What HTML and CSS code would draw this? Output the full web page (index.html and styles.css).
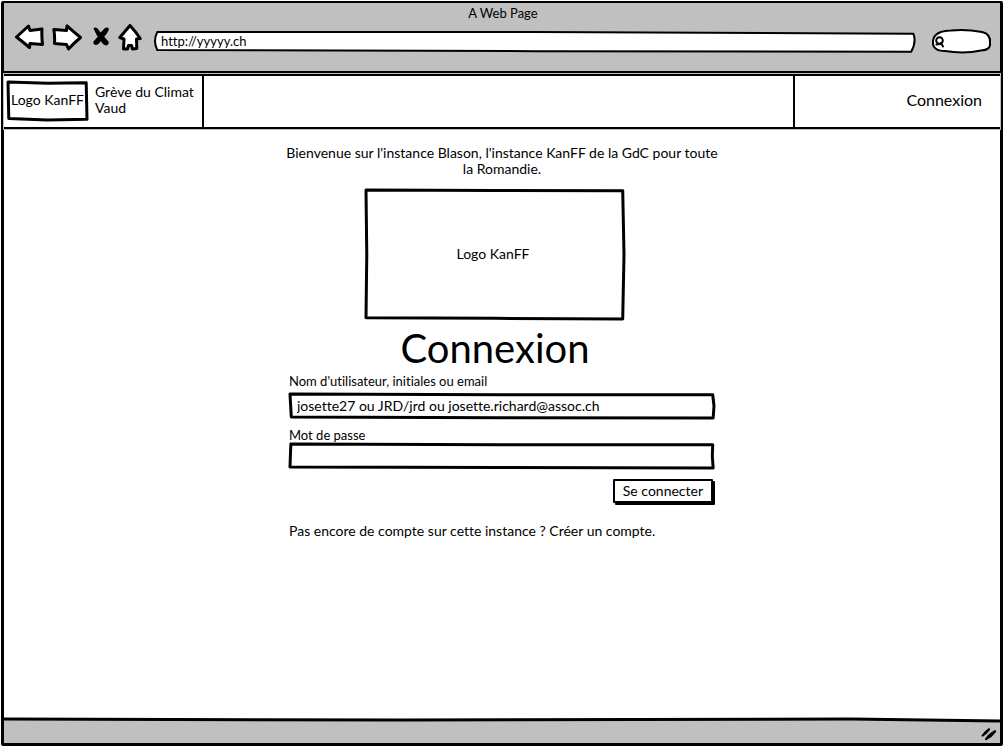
FILE: index.html
```html
<!DOCTYPE html>
<html lang="fr">
<head>
<meta charset="utf-8">
<meta name="viewport" content="width=device-width, initial-scale=1">
<title>A Web Page</title>
<link rel="stylesheet" href="styles.css">
</head>
<body>
<div class="browser">
  <header class="chrome">
    <div class="window-title">A Web Page</div>
    <div class="toolbar">
      <nav class="nav-buttons" aria-label="Navigation">
        <button type="button" class="icon-button" aria-label="Back"><svg width="30" height="28" viewBox="0 0 30 28"><path class="shape" d="M2.500 13 Q8 8 14.500 2 L16 6.500 L28 5 Q27.500 12 28.500 20.500 L16 19.500 L15.500 23.500 Q9 18 2.500 13 Z"/></svg></button>
        <button type="button" class="icon-button" aria-label="Forward"><svg width="30" height="28" viewBox="0 0 30 28"><path class="shape" d="M28.500 13.500 Q22 8 15 1.800 L14.500 6.500 L1.800 5.500 Q3 12 2.500 19.500 L14.500 20.500 L16.500 25 Q22 19 28.500 13.500 Z"/></svg></button>
        <button type="button" class="icon-button" aria-label="Stop"><svg width="20" height="28" viewBox="0 0 20 28"><path class="blade" d="M3.500 4.500 Q5 2.500 8 5 Q11.500 10 18.500 17.500 Q19.500 20.500 16 21.500 Q13 21 10.500 16.500 Q6 11 3.500 4.500 Z M14.500 4.500 Q17.500 2.500 19 5 Q18 9 12 15 Q9 21 5.500 21 Q3 20.500 3.500 17.500 Q8 13 10 9 Z"/></svg></button>
        <button type="button" class="icon-button" aria-label="Home"><svg width="24" height="28" viewBox="0 0 24 28"><path class="shape" d="M12 1.500 L1.800 13.500 L6 15 L5.500 25 L9.500 25 L10.500 21.500 L13.500 21.500 L14.500 25 L18.800 24.500 L18.500 15 L22.200 14.500 Q18 8 12 1.500 Z"/></svg></button>
      </nav>
      <div class="address">
        <svg class="sketch" viewBox="0 0 100 100" preserveAspectRatio="none" aria-hidden="true"><path d="M.3 0 L50 0 L99.800 9 Q100.200 50 99.500 99 L50 96 L.3 90 Q-.3 45 .3 0 Z"/></svg>
        <input type="text" class="address-input" aria-label="Address" value="http://yyyyy.ch">
      </div>
      <label class="search">
        <svg class="sketch" viewBox="0 0 60 24" preserveAspectRatio="none" aria-hidden="true"><path d="M2 12 Q3 2 20 1.500 Q35 0 51 3 Q60 5 59 14 Q60 21 50 21.500 Q33 25 14 22 Q1 22 2 12 Z"/></svg>
        <svg class="lens" width="12" height="12" viewBox="0 0 12 12" aria-hidden="true"><circle cx="5.500" cy="4.500" r="3.300"/><path d="M7 7 L9 10.500 M2.500 8.500 L6 8"/></svg>
        <input type="search" class="search-input" aria-label="Search">
      </label>
    </div>
  </header>

  <div class="site-header">
    <div class="brand">
      <div class="brand-logo">
        <svg class="sketch" viewBox="0 0 100 100" preserveAspectRatio="none" aria-hidden="true"><path d="M0 0 L50 3 L99 2 L100 98 L50 100 L1 96 Z"/></svg>
        <span>Logo KanFF</span>
      </div>
      <div class="brand-name">Grève du Climat<br>Vaud</div>
    </div>
    <div class="account"><a href="#login">Connexion</a></div>
  </div>

  <main class="content">
    <div class="column">
      <p class="welcome">Bienvenue sur l'instance Blason, l'instance KanFF de la GdC pour toute la Romandie.</p>
      <div class="intro">
        <div class="logo">
          <svg class="sketch" viewBox="0 0 100 100" preserveAspectRatio="none" aria-hidden="true"><path d="M0 0 L50 .3 L99.500 .5 L100 50 L99.500 100 L50 99.500 L0 99 L.3 50 Z"/></svg>
          <span>Logo KanFF</span>
        </div>
        <h1 class="title">Connexion</h1>
      </div>
      <form id="login" class="login">
        <label class="field-label" for="user">Nom d'utilisateur, initiales ou email</label>
        <div class="field">
          <svg class="sketch" viewBox="0 0 100 100" preserveAspectRatio="none" aria-hidden="true"><path d="M0 0 L50 3 L99.700 3 L100 50 L99.800 100 L50 99 L.3 96 Z"/></svg>
          <input id="user" type="text" class="field-input" value="josette27 ou JRD/jrd ou josette.richard@assoc.ch">
        </div>
        <label class="field-label password-label" for="password">Mot de passe</label>
        <div class="field">
          <svg class="sketch" viewBox="0 0 100 100" preserveAspectRatio="none" aria-hidden="true"><path d="M.2 0 L50 3 L99.700 3 L99.600 50 L99.800 100 L50 98 L0 96 Z"/></svg>
          <input id="password" type="password" class="field-input">
        </div>
        <button type="submit" class="submit">Se connecter</button>
      </form>
      <p class="signup">Pas encore de compte sur cette instance ? <a href="#signup">Créer un compte.</a></p>
    </div>
  </main>

  <footer class="status">
    <svg class="status-line" viewBox="0 0 1000 4" preserveAspectRatio="none" aria-hidden="true"><path class="above" d="M0 0 H1000 V3 L850 1 L0 1 Z"/><path class="rule" d="M0 1 L400 2 L850 1 L1000 3"/></svg>
    <svg class="grip" width="18" height="14" viewBox="0 0 18 14" aria-hidden="true"><path d="M1.500 8.500 Q4 4 9 1 Q10.500 1.500 10 3 Q7 7 3 9.500 Q1.500 10 1.500 8.500 Z M5 12 Q8 6.500 15 3 Q16.800 3.500 16 5 Q12.500 10 6.500 13 Q4.500 13.500 5 12 Z"/></svg>
  </footer>
</div>
</body>
</html>
```
FILE: styles.css
```css
* {
  box-sizing: border-box;
}

body {
  margin: 0;
  background: #fff;
  color: #000;
  font-family: Lato, "Noto Sans", sans-serif;
  font-size: 14px;
  font-variant-ligatures: none;
  line-height: 16px;
}

a {
  color: inherit;
  text-decoration: none;
}

button,
input {
  margin: 0;
  padding: 0;
  border: 0;
  background: transparent;
  color: inherit;
  font: inherit;
  font-variant-ligatures: none;
}

.browser {
  display: flex;
  flex-direction: column;
  min-height: calc(100vh - 2px);
  margin: 1px;
  border: 3px solid #000;
  border-top-width: 2px;
  border-radius: 2px;
}

.sketch {
  position: absolute;
  inset: 1px;
  width: calc(100% - 2px);
  height: calc(100% - 2px);
  overflow: visible;
  fill: #fff;
  stroke: #000;
  stroke-width: 3px;
  stroke-linejoin: round;
}

.sketch path {
  vector-effect: non-scaling-stroke;
}

/* Browser chrome */

.chrome {
  padding: 2px 8px 18px 10px;
  background: #c0c0c0;
  border-bottom: 2px solid #000;
}

.window-title {
  font-size: 13px;
  text-align: center;
}

.toolbar {
  display: flex;
  align-items: center;
  height: 32px;
  padding-top: 2px;
  font-size: 13px;
}

.toolbar .sketch {
  stroke-width: 2px;
}

.nav-buttons {
  display: flex;
  align-items: center;
  gap: 8px;
  margin-right: 12px;
}

.icon-button svg {
  display: block;
}

.shape {
  fill: #fff;
  stroke: #000;
  stroke-width: 3px;
  stroke-linejoin: round;
}

.address {
  position: relative;
  flex: 1;
  height: 22px;
  margin-top: 8px;
}

.address-input {
  position: relative;
  width: 100%;
  height: 19px;
  padding: 0 7px;
}

.search {
  position: relative;
  display: flex;
  align-items: center;
  width: 62px;
  height: 26px;
  margin: 6px 0 0 14px;
}

.lens {
  position: relative;
  flex: none;
  margin: 2px 0 0 4px;
  fill: none;
  stroke: #000;
  stroke-width: 2px;
  stroke-linecap: round;
}

.search-input {
  position: relative;
  width: 36px;
}

/* Site header */

.site-header {
  display: flex;
  justify-content: space-between;
  margin-top: 1px;
  border-top: 2px solid #000;
  border-bottom: 2px solid #000;
  outline: 1px solid #c0c0c0;
}

.brand {
  display: flex;
  align-items: center;
  gap: 7px;
  width: 200px;
  height: 51px;
  padding: 0 0 2px 3px;
  border-right: 2px solid #000;
}

.brand-logo {
  position: relative;
  display: flex;
  align-items: center;
  justify-content: center;
  width: 81px;
  height: 40px;
  padding-bottom: 2px;
  white-space: nowrap;
}

.brand-name {
  padding-bottom: 2px;
}

.brand-logo span,
.logo span {
  position: relative;
}

.account {
  display: flex;
  align-items: center;
  justify-content: flex-end;
  width: 207px;
  padding: 0 18px 4px 0;
  border-left: 2px solid #000;
  font-size: 16px;
}

/* Login page */

.content {
  flex: 1;
  padding: 16px;
}

.column {
  width: 100%;
  max-width: 426px;
  margin: 0 auto;
}

.welcome {
  margin: 0 -4px 12px;
  text-align: center;
}

.intro {
  display: flex;
  flex-direction: column;
  align-items: center;
  padding-right: 14px;
}

.logo {
  position: relative;
  display: flex;
  align-items: center;
  justify-content: center;
  width: 260px;
  max-width: 100%;
  height: 131px;
  padding: 0 4px 2px 0;
}

.title {
  margin: 4px 0 0;
  font-size: 40px;
  font-weight: 400;
  line-height: 48px;
}

.login {
  display: flex;
  flex-direction: column;
}

.field-label {
  margin: 1px 0 4px;
  font-size: 13px;
}

.password-label {
  margin: 8px 0 0;
}

.field {
  position: relative;
  height: 26px;
}

.field-input {
  position: relative;
  width: 100%;
  height: 24px;
  padding: 0 8px;
}

.submit {
  align-self: flex-end;
  height: 24px;
  margin: 10px 2px 0 0;
  padding: 0 8px;
  border: 2px solid #000;
  border-radius: 1px;
  background: #fff;
  box-shadow: 2px 2px 0 #000;
  line-height: 20px;
}

.signup {
  margin: 20px 0 0;
}

/* Status bar */

.status {
  display: flex;
  flex-direction: column;
  height: 25px;
  background: #c0c0c0;
}

.status-line {
  width: 100%;
  height: 4px;
  overflow: visible;
}

.status-line .above {
  fill: #fff;
}

.status-line .rule {
  fill: none;
  stroke: #000;
  stroke-width: 3px;
  vector-effect: non-scaling-stroke;
}

.grip {
  align-self: flex-end;
  margin: 5px 2px 0 0;
}
```
